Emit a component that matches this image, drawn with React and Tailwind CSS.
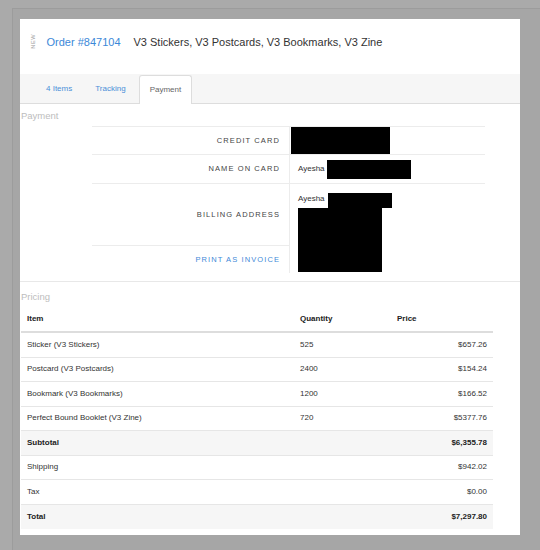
const items = [
  { name: "Sticker (V3 Stickers)", qty: "525", price: "$657.26" },
  { name: "Postcard (V3 Postcards)", qty: "2400", price: "$154.24" },
  { name: "Bookmark (V3 Bookmarks)", qty: "1200", price: "$166.52" },
  { name: "Perfect Bound Booklet (V3 Zine)", qty: "720", price: "$5377.76" },
];

const totals = [
  { label: "Subtotal", value: "$6,355.78", strong: true },
  { label: "Shipping", value: "$942.02" },
  { label: "Tax", value: "$0.00" },
  { label: "Total", value: "$7,297.80", strong: true },
];

function Label({ children, blue }) {
  return (
    <span
      className={
        "text-[7.5px] tracking-[1.1px] uppercase " +
        (blue ? "text-[#3f8ad8]" : "text-[#444444]")
      }
    >
      {children}
    </span>
  );
}

export default function App() {
  return (
    <div className="w-[540px] h-[550px] overflow-hidden bg-[#aaaaaa] pt-[8px] pl-[12px] font-['Liberation_Sans',Arial,sans-serif]">
      <div className="h-full bg-[#a6a6a6] border-t border-l border-[#9c9c9c] pt-[10px] pl-[7px]">
        <div className="w-[500px] bg-white">
          {/* Header */}
          <div className="h-[55px] flex items-start pt-[15px] pl-[11px]">
            <span className="[writing-mode:vertical-rl] rotate-180 text-[5.5px] tracking-[0.6px] text-[#999999] leading-none">
              NEW
            </span>
            <span className="ml-[10px] text-[11px] leading-[16px] text-[#3b88d8]">
              Order #847104
            </span>
            <span className="ml-[13px] text-[11px] leading-[16px] text-[#333333]">
              V3 Stickers, V3 Postcards, V3 Bookmarks, V3 Zine
            </span>
          </div>

          {/* Tabs */}
          <div className="h-[30px] bg-[#f6f6f6] border-b border-[#dddddd] flex items-end pl-[16px] gap-[3px]">
            <div className="h-[28px] px-[10px] flex items-center text-[8px] text-[#4a8fd8]">
              4 Items
            </div>
            <div className="h-[28px] px-[10px] flex items-center text-[8px] text-[#4a8fd8]">
              Tracking
            </div>
            <div className="h-[29px] -mb-px px-[10px] flex items-center text-[8px] text-[#666666] bg-white border border-b-0 border-[#dddddd] rounded-t-[3px]">
              Payment
            </div>
          </div>

          {/* Payment */}
          <div className="border-b border-[#e8e8e8] pb-[8px]">
            <div className="pt-[6px] pl-[1px] h-[22px] text-[9.5px] leading-[12px] text-[#bdbdbd]">
              Payment
            </div>
            <div className="ml-[72px] w-[393px] border-t border-[#ececec] grid grid-cols-[197px_196px]">
              <div className="h-[28px] border-b border-[#ececec] flex items-center justify-end pr-[9px]">
                <Label>Credit Card</Label>
              </div>
              <div className="h-[28px] border-b border-l border-[#ececec] pl-[1px]">
                <div className="w-[99px] h-[27px] bg-black" />
              </div>

              <div className="h-[29px] border-b border-[#ececec] flex items-center justify-end pr-[9px]">
                <Label>Name on Card</Label>
              </div>
              <div className="h-[29px] border-b border-l border-[#ececec] pl-[8px] flex items-center">
                <span className="text-[8px] text-[#333333]">Ayesha</span>
                <div className="ml-[2px] w-[84px] h-[19px] bg-black" />
              </div>

              <div className="h-[62px] border-b border-[#ececec] flex items-center justify-end pr-[9px]">
                <Label>Billing Address</Label>
              </div>
              <div className="row-span-2 border-l border-[#ececec] pl-[8px] pt-[9px]">
                <div className="flex items-start">
                  <span className="text-[8px] leading-[11px] text-[#333333]">Ayesha</span>
                  <div className="ml-[3px] w-[64px] h-[15px] bg-black" />
                </div>
                <div className="w-[84px] h-[64px] bg-black" />
              </div>

              <div className="h-[27px] flex items-center justify-end pr-[9px]">
                <Label blue>Print as Invoice</Label>
              </div>
            </div>
          </div>

          {/* Pricing */}
          <div className="pb-[6px]">
            <div className="pt-[9px] pl-[1px] h-[21px] text-[9.5px] leading-[12px] text-[#bdbdbd]">
              Pricing
            </div>
            <div className="ml-[1px] w-[472px] text-[8px] text-[#333333]">
              <div className="grid grid-cols-[273px_97px_102px] pt-[10px] pb-[6px] leading-[12px] font-bold text-[#222222] border-b-2 border-[#dddddd]">
                <div className="pl-[6px]">Item</div>
                <div className="pl-[6px]">Quantity</div>
                <div className="pl-[6px]">Price</div>
              </div>
              {items.map((it) => (
                <div
                  key={it.name}
                  className="grid grid-cols-[273px_97px_102px] h-[24.5px] items-center border-b border-[#e6e6e6]"
                >
                  <div className="pl-[6px]">{it.name}</div>
                  <div className="pl-[6px]">{it.qty}</div>
                  <div className="pr-[6px] text-right">{it.price}</div>
                </div>
              ))}
              {totals.map((t, i) => (
                <div
                  key={t.label}
                  className={
                    "flex justify-between items-center h-[24.5px] px-[6px] " +
                    (t.strong ? "bg-[#f6f6f6] font-bold text-[#222222] " : "") +
                    (i < totals.length - 1 ? "border-b border-[#e6e6e6]" : "")
                  }
                >
                  <span>{t.label}</span>
                  <span>{t.value}</span>
                </div>
              ))}
            </div>
          </div>
        </div>
      </div>
    </div>
  );
}
